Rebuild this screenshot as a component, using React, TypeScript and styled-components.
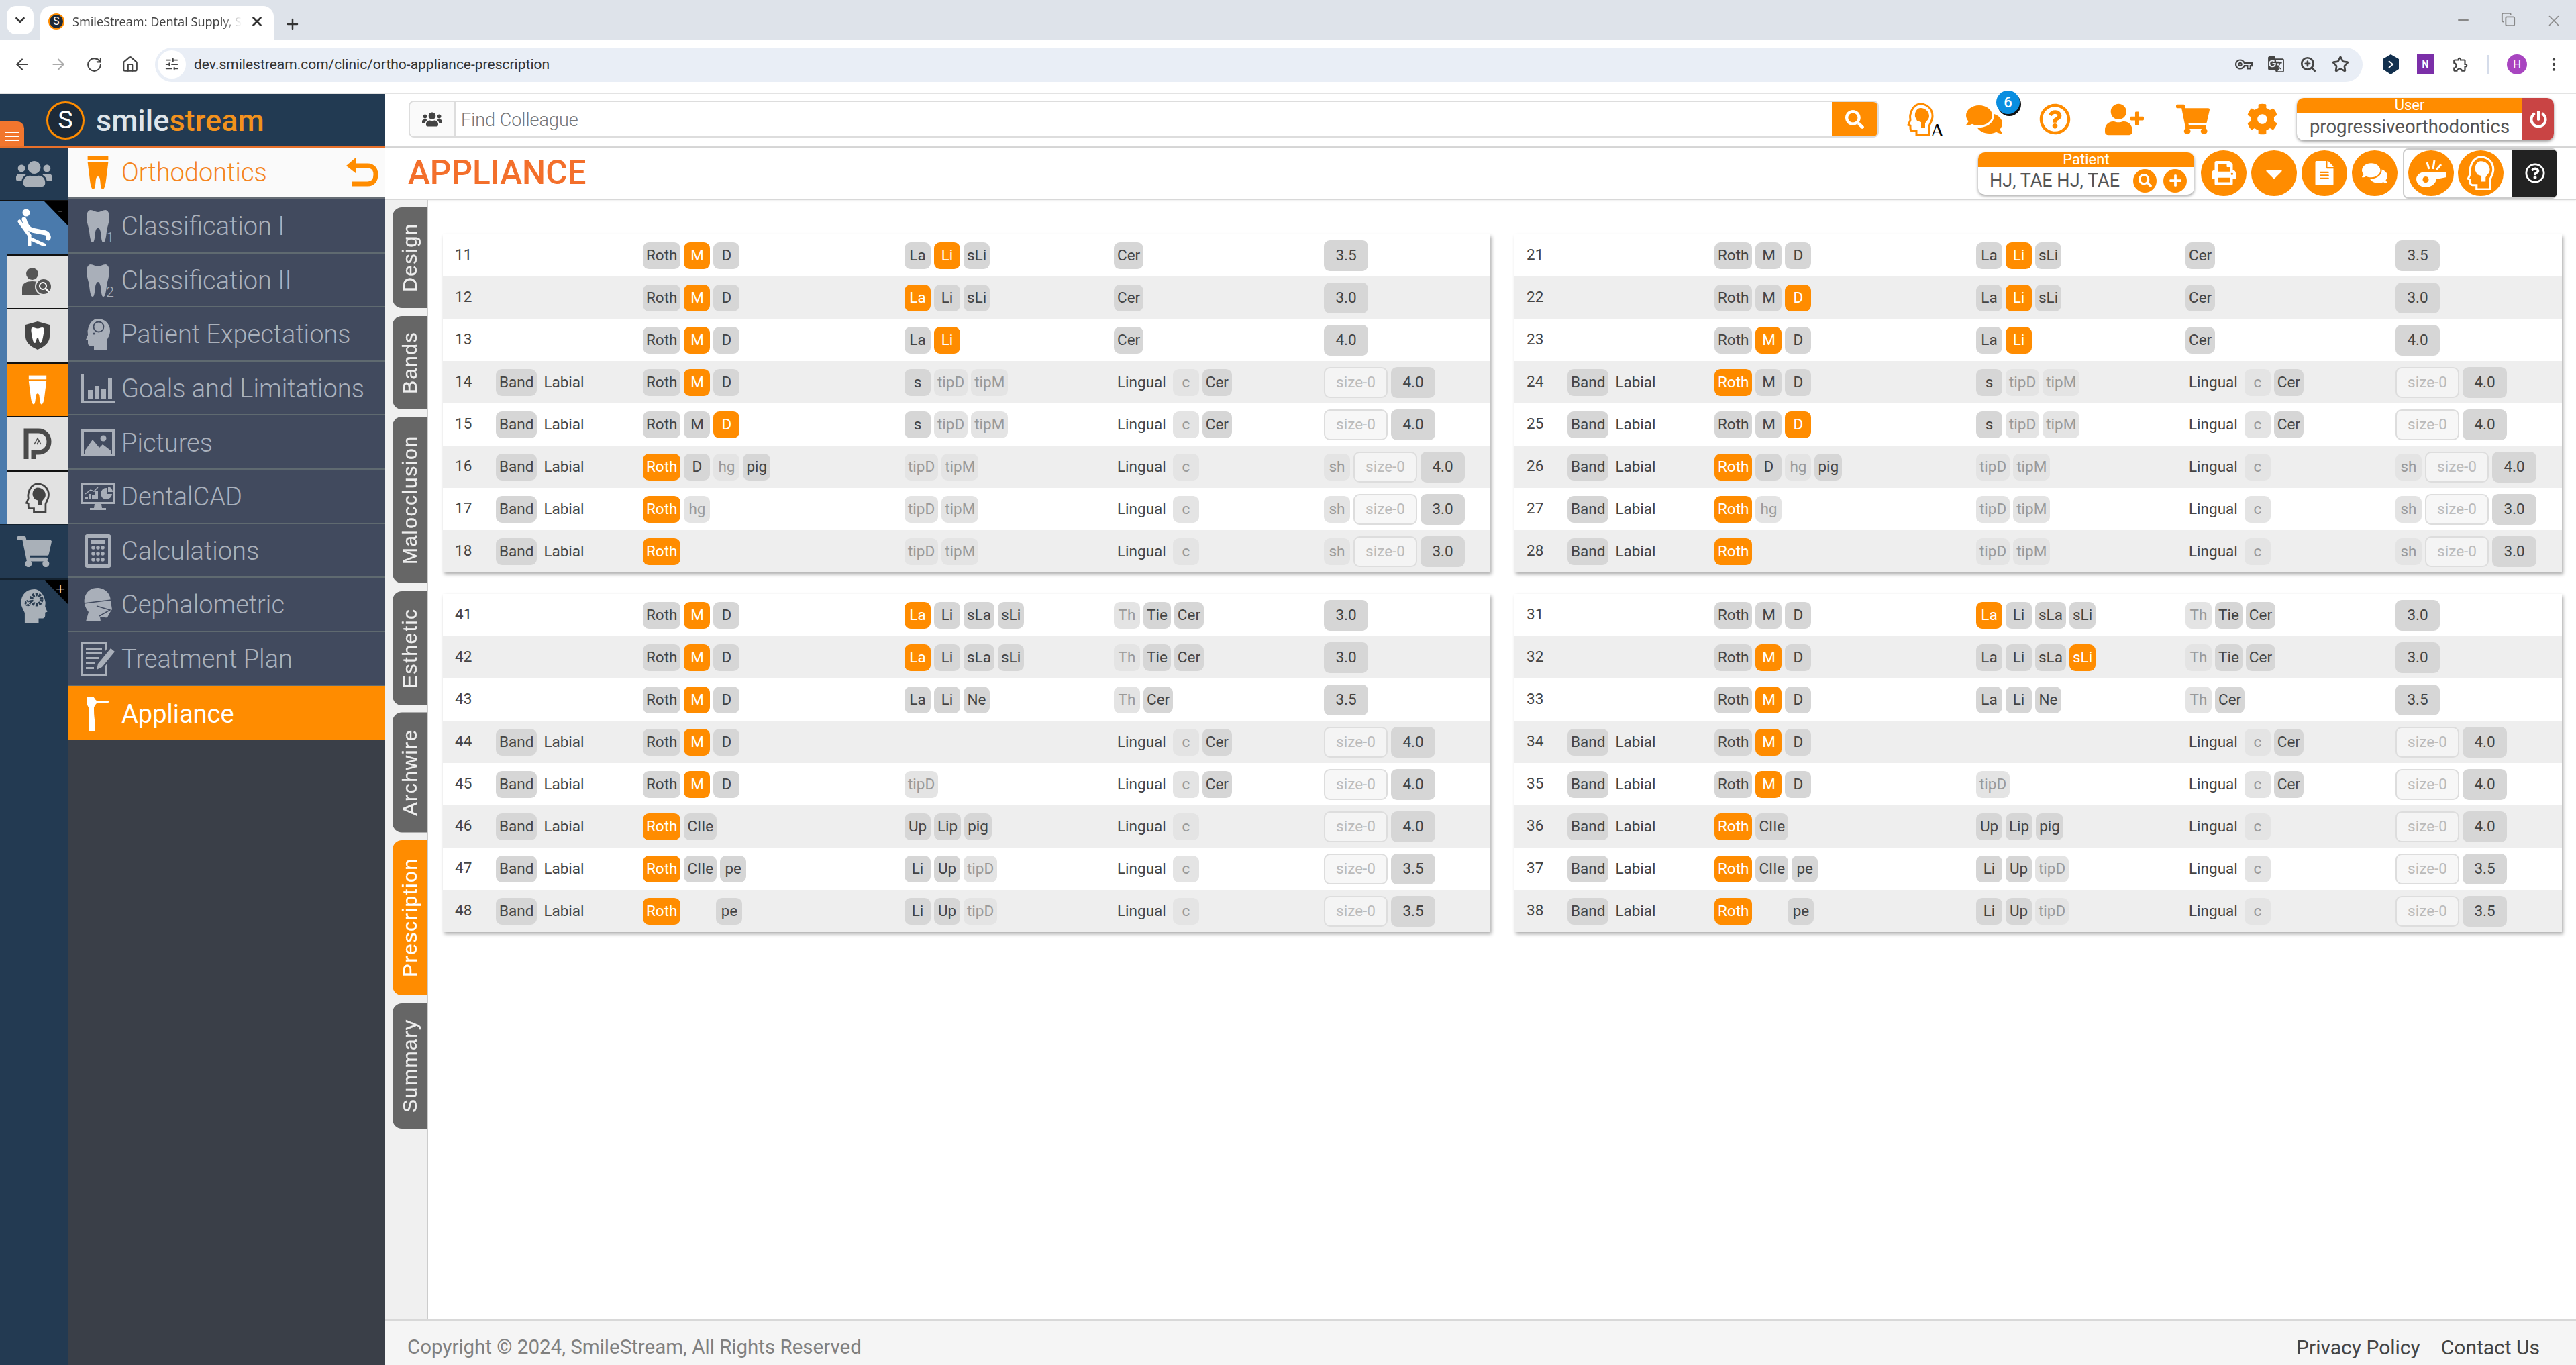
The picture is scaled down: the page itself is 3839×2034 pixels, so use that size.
import React from 'react'
import styled, { createGlobalStyle } from 'styled-components'
import {
  ArrowLeft, ArrowRight, RotateCw, Home, ChevronDown, X, Plus, Minus, Copy,
  ZoomIn, Star, MoreVertical, SlidersHorizontal,
} from 'lucide-react'
import {
  FaUsers, FaSearch, FaRegQuestionCircle, FaUserPlus, FaShoppingCart, FaCog, FaPowerOff,
  FaPrint, FaCaretDown, FaFileAlt, FaComments, FaPlus,
} from 'react-icons/fa'
import { MdGTranslate, MdOutlineVpnKey, MdOutlineExtension } from 'react-icons/md'

const ORANGE = '#ff8c00'

const GlobalStyle = createGlobalStyle`
  html, body { margin: 0; padding: 0; background: #fff; overflow: hidden; }
  * { box-sizing: border-box; }
  body { font-family: Roboto, "Liberation Sans", sans-serif; color: #444; }
`

const Page = styled.div`
  width: 3839px;
  height: 2034px;
  display: flex;
  flex-direction: column;
  overflow: hidden;
`

/* browser chrome */
const TabStrip = styled.div`
  height: 60px;
  background: #dee3ea;
  display: flex;
  align-items: flex-end;
  padding-left: 10px;
  color: #333;
`
const TabList = styled.div`
  width: 40px;
  height: 42px;
  margin-bottom: 9px;
  margin-right: 10px;
  border-radius: 14px;
  background: #fff;
  display: flex;
  align-items: center;
  justify-content: center;
`
const BrowserTab = styled.div`
  width: 348px;
  height: 51px;
  background: #fff;
  border-radius: 16px 16px 0 0;
  display: flex;
  align-items: center;
  padding: 0 14px 6px 12px;
  gap: 12px;
`
const TabTitle = styled.span`
  flex: 1;
  white-space: nowrap;
  overflow: hidden;
  font-family: "Noto Sans", sans-serif;
  font-size: 18px;
  color: #444;
  -webkit-mask-image: linear-gradient(90deg, #000 88%, transparent);
`
const NewTab = styled.div`
  margin: 0 0 12px 16px;
  display: flex;
`
const WindowButtons = styled.div`
  margin: 18px 20px 16px auto;
  display: flex;
  gap: 44px;
  color: #888;
  align-self: flex-start;
`
const Toolbar = styled.div`
  height: 80px;
  background: #fff;
  border-bottom: 2px solid #e3e3e3;
  display: flex;
  align-items: center;
  padding: 0 0 6px 20px;
  color: #444;
`
const NavButtons = styled.div`
  display: flex;
  align-items: center;
  gap: 28px;
  margin-right: 24px;
`
const Omnibox = styled.div`
  width: 3290px;
  height: 51px;
  flex: none;
  border-radius: 26px;
  background: #e9eef6;
  display: flex;
  align-items: center;
  padding: 0 20px 0 4px;
  gap: 12px;
`
const SiteInfo = styled.div`
  width: 42px;
  height: 42px;
  border-radius: 50%;
  background: #fff;
  display: flex;
  align-items: center;
  justify-content: center;
`
const UrlText = styled.span`
  font-size: 21px;
  color: #333;
  flex: 1;
`
const OmniIcons = styled.div`
  display: flex;
  align-items: center;
  gap: 22px;
`
const ExtIcons = styled.div`
  display: flex;
  align-items: center;
  gap: 27px;
  margin-left: 30px;
`
const Avatar = styled.div`
  width: 30px;
  height: 30px;
  border-radius: 50%;
  background: #a845c0;
  color: #fff;
  font-size: 17px;
  display: flex;
  align-items: center;
  justify-content: center;
`
const ExtDivider = styled.div`
  width: 2px;
  height: 28px;
  background: #d5dcea;
`
const OneNote = styled.div`
  width: 25px;
  height: 30px;
  background: #7b2fa8;
  color: #fff;
  font-size: 14px;
  font-weight: 700;
  display: flex;
  align-items: center;
  justify-content: center;
`

/* app frame */
const Body = styled.div`
  flex: 1;
  display: flex;
  min-height: 0;
`
const Sidebar = styled.aside`
  width: 574px;
  flex: none;
  display: flex;
  flex-direction: column;
  position: relative;
`
const LogoBar = styled.div`
  height: 80px;
  flex: none;
  background: #223a52;
  border-bottom: 2px solid #e8702a;
  display: flex;
  align-items: center;
  padding-left: 69px;
  gap: 17px;
`
const LogoMark = styled.div<{ $size: number }>`
  width: ${(p) => p.$size}px;
  height: ${(p) => p.$size}px;
  border-radius: 50%;
  border: ${(p) => Math.max(2, p.$size * 0.06)}px solid ${ORANGE};
  background: #1d2a38;
  color: #fff;
  font-size: ${(p) => p.$size * 0.66}px;
  line-height: 1;
  display: flex;
  align-items: center;
  justify-content: center;
  flex: none;
`
const LogoText = styled.div`
  font-size: 45px;
  font-weight: 500;
  color: #dfe5ea;
  line-height: 1;
  span { color: #f2921d; }
`
const MenuToggle = styled.div`
  position: absolute;
  left: 0;
  top: 41px;
  width: 36px;
  height: 37px;
  background: #f2762e;
  border-radius: 0 10px 0 0;
  display: flex;
  flex-direction: column;
  justify-content: flex-end;
  gap: 4px;
  padding: 0 8px 8px;
  i { display: block; height: 2px; background: #fff; }
`
const SideColumns = styled.div`
  flex: 1;
  display: flex;
  min-height: 0;
`
const Rail = styled.nav`
  width: 101px;
  flex: none;
  background: #233a52;
  display: flex;
  flex-direction: column;
`
const RailGroup = styled.div`
  background: #4a7aac;
  padding-left: 11px;
  display: flex;
  flex-direction: column;
`
const RailItem = styled.div<{ $tone?: 'navy' | 'blue' | 'grey' | 'orange' }>`
  height: 80.5px;
  position: relative;
  display: flex;
  align-items: center;
  justify-content: center;
  border-top: 2px solid ${(p) => (p.$tone === 'navy' ? '#14222f' : '#111')};
  background: ${(p) =>
    p.$tone === 'orange' ? ORANGE : p.$tone === 'blue' ? '#4a7aac' : p.$tone === 'grey' ? '#e2e2e2' : '#233a52'};
`
const RailTop = styled(RailItem)`
  height: 78px;
  border-top: none;
`
const BlueItem = styled(RailItem)`
  margin-left: -11px;
`
const Corner = styled.div`
  position: absolute;
  top: 0;
  right: 0;
  width: 0;
  height: 0;
  border-style: solid;
  border-width: 0 35px 36px 0;
  border-color: transparent #000 transparent transparent;
`
const CornerMark = styled.span`
  position: absolute;
  top: 2px;
  right: 3px;
  width: 16px;
  text-align: center;
  font-size: 24px;
  line-height: 24px;
  font-weight: 300;
  color: #fff;
`
const Menu = styled.div`
  flex: 1;
  background: #3a3f48;
  display: flex;
  flex-direction: column;
`
const MenuHead = styled.div`
  height: 77px;
  flex: none;
  background: #fafafa;
  display: flex;
  align-items: center;
  padding: 0 10px 0 20px;
  border-bottom: 3px solid #666d75;
`
const MenuRow = styled.div<{ $active?: boolean }>`
  height: ${(p) => (p.$active ? 81 : 80.6)}px;
  flex: none;
  background: ${(p) => (p.$active ? ORANGE : '#414a5e')};
  border-bottom: ${(p) => (p.$active ? 'none' : '2px solid #5f6a70')};
  display: flex;
  align-items: center;
  padding: 2px 0 0 20px;
`
const MenuIcon = styled.div`
  width: 60px;
  flex: none;
  padding-right: 10px;
  display: flex;
  justify-content: center;
  align-items: center;
  position: relative;
`
const ToothSub = styled.span`
  position: absolute;
  right: 11px;
  bottom: -4px;
  font-size: 21px;
  line-height: 21px;
  font-weight: 300;
  color: #a9afb9;
`
const MenuLabel = styled.span<{ $active?: boolean; $head?: boolean }>`
  font-size: 38px;
  font-weight: ${(p) => (p.$active ? 400 : 300)};
  color: ${(p) => (p.$head ? '#f5851f' : p.$active ? '#fff' : '#aab1bc')};
  flex: 1;
`

const Main = styled.main`
  flex: 1;
  min-width: 0;
  display: flex;
  flex-direction: column;
`
const TopBar = styled.div`
  height: 80px;
  flex: none;
  border-bottom: 2px solid #d8d8d8;
  display: flex;
  align-items: center;
  padding: 0 0 3px 35px;
`
const Search = styled.div`
  width: 2191px;
  height: 55px;
  margin-right: 11px;
  display: flex;
  border: 2px solid #ddd;
  border-radius: 8px;
  overflow: hidden;
  flex: none;
`
const SearchAddon = styled.div`
  width: 68px;
  border-right: 2px solid #ddd;
  display: flex;
  align-items: center;
  justify-content: center;
  color: #444;
  background: #fafafa;
`
const SearchInput = styled.div`
  flex: 1;
  padding: 2px 0 0 8px;
  font-size: 27px;
  font-weight: 300;
  color: #777;
  display: flex;
  align-items: center;
`
const SearchButton = styled.div`
  width: 68px;
  background: ${ORANGE};
  display: flex;
  align-items: center;
  justify-content: center;
  color: #fff;
`
const TopIcon = styled.div<{ $nudge?: number }>`
  width: 102px;
  flex: none;
  padding-right: ${(p) => p.$nudge ?? 0}px;
  display: flex;
  align-items: center;
  justify-content: center;
  position: relative;
  color: ${ORANGE};
`
const SerifA = styled.span`
  position: absolute;
  left: 66px;
  bottom: -6px;
  font-family: "Liberation Serif", serif;
  font-size: 28px;
  line-height: 28px;
  color: #000;
`
const Badge = styled.span`
  position: absolute;
  left: 62px;
  top: -16px;
  width: 35px;
  height: 35px;
  border-radius: 50%;
  background: #0a8ee0;
  box-shadow: 2px 3px 0 #111;
  color: #fff;
  font-size: 22px;
  font-weight: 500;
  display: flex;
  align-items: center;
  justify-content: center;
`
const IdBox = styled.div`
  width: 322px;
  border-radius: 10px;
  box-shadow: 0 2px 4px rgba(0, 0, 0, 0.4);
  background: #fff;
  flex: none;
`
const IdHead = styled.div<{ $square?: boolean }>`
  height: 22px;
  background: ${ORANGE};
  border-radius: ${(p) => (p.$square ? '10px 0 0 0' : '10px 10px 0 0')};
  color: #fff;
  font-size: 22px;
  line-height: 22px;
  text-align: center;
`
const UserBox = styled.div`
  display: flex;
  height: 63px;
  width: 383px;
  flex: none;
  border-radius: 10px;
  background: #fff;
  box-shadow: 0 2px 4px rgba(0, 0, 0, 0.4);
`
const UserMain = styled.div`
  flex: 1;
  display: flex;
  flex-direction: column;
`
const UserName = styled.div`
  flex: 1;
  font-size: 27.5px;
  color: #555;
  display: flex;
  align-items: center;
  justify-content: center;
`
const PowerBlock = styled.div`
  width: 47px;
  background: #c94444;
  border-radius: 0 10px 10px 0;
  color: #fff;
  display: flex;
  align-items: center;
  justify-content: center;
`
const SubBar = styled.div`
  height: 78px;
  flex: none;
  border-bottom: 2px solid #d8d8d8;
  box-shadow: 0 1px 3px rgba(0, 0, 0, 0.08);
  display: flex;
  align-items: center;
  padding: 0 28px 0 34px;
`
const Title = styled.h1`
  flex: 1;
  margin: 0;
  font-size: 49.5px;
  font-weight: 500;
  color: #f36f2b;
  line-height: 1;
`
const PatientBody = styled.div`
  height: 41px;
  display: flex;
  align-items: center;
  padding: 0 11px 0 17px;
`
const PatientName = styled.span`
  flex: 1;
  font-size: 27px;
  color: #555;
`
const SmallRound = styled.div`
  width: 35px;
  height: 35px;
  margin-left: 10px;
  border-radius: 50%;
  background: ${ORANGE};
  color: #fff;
  display: flex;
  align-items: center;
  justify-content: center;
`
const RoundButton = styled.div`
  width: 68px;
  height: 68px;
  border-radius: 50%;
  background: ${ORANGE};
  color: #fff;
  display: flex;
  align-items: center;
  justify-content: center;
  flex: none;
`
const RoundRow = styled.div`
  display: flex;
  gap: 7px;
  margin: 0 8px 0 10px;
`
const ToolGroup = styled.div`
  width: 230px;
  height: 75px;
  border: 2px solid #ccc;
  border-right: none;
  border-radius: 8px;
  display: flex;
  align-items: center;
  gap: 6px;
  padding-left: 6px;
  overflow: hidden;
  flex: none;
`
const HelpBlock = styled.div`
  margin-left: auto;
  width: 67px;
  height: 100%;
  background: #222;
  color: #fff;
  display: flex;
  align-items: center;
  justify-content: center;
`

const ContentRow = styled.div`
  flex: 1;
  display: flex;
  min-height: 0;
`
const TabGutter = styled.div`
  width: 64px;
  flex: none;
  background: #f0f0f0;
  border-right: 2px solid #ccc;
  padding: 11px 0 0 11px;
  display: flex;
  flex-direction: column;
  gap: 11.5px;
`
const SideTab = styled.div<{ $active?: boolean; $length: number }>`
  width: 51px;
  height: ${(p) => p.$length}px;
  flex: none;
  border-radius: 0 14px 14px 0;
  background: ${(p) => (p.$active ? ORANGE : '#666')};
  color: ${(p) => (p.$active ? '#fff' : '#eee')};
  writing-mode: vertical-rl;
  transform: rotate(180deg);
  font-family: "Liberation Sans", sans-serif;
  font-size: 30px;
  letter-spacing: 1.6px;
  -webkit-text-stroke: 0.3px currentColor;
  line-height: 51px;
  text-align: center;
`
const PanelGrid = styled.div`
  flex: 1;
  padding: 51px 21px 0 22px;
  display: grid;
  grid-template-columns: 1fr 1fr;
  grid-auto-rows: min-content;
  column-gap: 36px;
  row-gap: 32px;
`
const Panel = styled.section`
  box-shadow: 2px 3px 5px rgba(0, 0, 0, 0.32);
  background: #fff;
`
const Row = styled.div`
  height: 63px;
  display: grid;
  grid-template-columns: 79px 219px 390px 312px 313px 1fr;
  align-items: center;
  &:nth-child(even) { background: #eee; }
`
const Num = styled.div`
  padding: 0 0 3px 18px;
  font-size: 22.5px;
  color: #444;
`
const Cell = styled.div`
  display: flex;
  align-items: center;
  gap: 5px;
  font-size: 22.5px;
`
const Pill = styled.span<{ $state?: Tone }>`
  min-width: 39px;
  height: 40px;
  padding: 0 5px 2px;
  border-radius: 9px;
  display: inline-flex;
  align-items: center;
  justify-content: center;
  background: ${(p) => (p.$state === 'on' ? ORANGE : p.$state === 'dim' ? '#e4e4e4' : '#d6d6d6')};
  color: ${(p) => (p.$state === 'on' ? '#fff' : p.$state === 'dim' ? '#999' : '#444')};
`
const Spacer = styled.span`
  width: 43px;
`
const PlainText = styled.span`
  padding: 0 5px 2px;
  color: #444;
`
const SizeValue = styled(Pill)`
  height: 46px;
  width: 66px;
`
const SizeInput = styled.span`
  width: 95px;
  height: 46px;
  padding-bottom: 2px;
  border: 2px solid #ddd;
  border-radius: 9px;
  background: rgba(245, 245, 245, 0.8);
  color: #bbb;
  display: inline-flex;
  align-items: center;
  justify-content: center;
`

const Footer = styled.footer`
  height: 68px;
  flex: none;
  background: #f5f5f5;
  border-top: 2px solid #d8d8d8;
  display: flex;
  align-items: center;
  padding: 12px 54px 0 33px;
  font-size: 30px;
`
const Copyright = styled.span`
  flex: 1;
  color: #808080;
  font-size: 29.5px;
`
const FootLink = styled.a`
  color: #444;
  margin-left: 31px;
`

/* drawings */
const tooth = 'M6 0C10 0 13 3 17 3C21 3 24 0 28 0C32 0 34 5 34 11C34 18 31 24 30 32C29 40 28 48 25 48C22 48 22 40 21 33C20 28 18 26 17 26C16 26 14 28 13 33C12 40 12 48 9 48C6 48 5 40 4 32C3 24 0 18 0 11C0 5 2 0 6 0Z'
const head = 'M20 1C31 1 38 9 38 19C38 26 34 30 33 34L33 47L14 47L14 41L8 41C6 41 5 39 5 37L5 33L2 32L5 25C5 22 4 20 5 17C7 7 13 1 20 1Z'
const brain = 'M20 7C28 7 33 13 33 19C33 24 29 26 27 30L27 36L21 36L21 28L15 26L12 20C11 13 15 7 20 7Z'

const Tooth = ({ color = '#a9afb9', w = 34, h = 48 }: { color?: string; w?: number; h?: number }) => (
  <svg width={w} height={h} viewBox="0 0 34 48"><path d={tooth} fill={color} /></svg>
)
const CrownTooth = ({ color, w, h }: { color: string; w: number; h: number }) => (
  <svg width={w} height={h} viewBox="0 0 34 52" fill={color}>
    <path d="M1 0H33V7H1Z" />
    <path d="M1 10H33L30 34C29 42 28 52 24 52C21 52 21 42 20 36C19 31 15 31 14 36C13 42 13 52 10 52C6 52 5 42 4 34Z" />
  </svg>
)
const ChairIcon = () => (
  <svg width="54" height="56" viewBox="0 0 54 56" fill="none" stroke="#fff" strokeLinecap="round">
    <circle cx="15" cy="6" r="5.500" fill="#fff" stroke="none" />
    <path d="M5 19L20 40" strokeWidth="5" />
    <path d="M12 16C14 24 18 30 24 32L44 36C47 37 49 41 48 44" strokeWidth="7" />
    <path d="M20 40L20 54M20 44L42 54" strokeWidth="5" />
  </svg>
)
const UserSearchIcon = () => (
  <svg width="46" height="42" viewBox="0 0 46 42">
    <circle cx="15" cy="9" r="9" fill="#555" />
    <path d="M0 40V30C0 23 7 20 15 20C23 20 30 23 30 30V40Z" fill="#555" />
    <circle cx="32" cy="28" r="12" fill="#555" stroke="#e2e2e2" strokeWidth="2" />
    <circle cx="31" cy="27" r="5" fill="none" stroke="#fff" strokeWidth="2" />
    <path d="M35 31L40 36" stroke="#fff" strokeWidth="2.500" />
  </svg>
)
const ShieldIcon = () => (
  <svg width="36" height="42" viewBox="0 0 36 42">
    <path d="M18 0L36 5V22C36 32 27 38 18 42C9 38 0 32 0 22V5Z" fill="#444" />
    <path d="M11 9C14 9 15 10.500 18 10.500C21 10.500 22 9 25 9C28 9 28 13 27 18C26 23 25 32 22 32C20 32 20 24 18 24C16 24 16 32 14 32C11 32 10 23 9 18C8 13 8 9 11 9Z" fill="#fff" />
  </svg>
)
const PLogoIcon = () => (
  <svg width="42" height="46" viewBox="0 0 42 46" fill="none" stroke="#4a4a4a">
    <path d="M4 46V4H22C32 4 38 11 38 20C38 30 31 36 22 36H15V46" strokeWidth="7" />
    <path d="M16 24L21 15L26 24M20 24L23 19" strokeWidth="1.500" />
  </svg>
)
const BrainHeadIcon = ({ line, fill, w, h }: { line: string; fill: string; w: number; h: number }) => (
  <svg width={w} height={h} viewBox="0 0 40 48">
    <path d={head} fill="none" stroke={line} strokeWidth="3" />
    <path d={brain} fill={fill} />
  </svg>
)
const ThoughtHeadIcon = () => (
  <svg width="40" height="50" viewBox="0 0 40 48" fill="#a9afb9">
    <path d={head} />
    <circle cx="21" cy="13" r="7.500" fill="none" stroke="#414a5e" strokeWidth="1.800" />
    <circle cx="14" cy="23" r="1.600" fill="#414a5e" />
  </svg>
)
const GearHeadIcon = () => (
  <svg width="46" height="52" viewBox="0 0 40 48">
    <path d={head} transform="translate(40 0) scale(-1 1)" fill="#a9b0b8" />
    <circle cx="23" cy="15" r="7" fill="none" stroke="#2a3c50" strokeWidth="5" strokeDasharray="3 1.500" />
    <circle cx="11" cy="20" r="3" fill="none" stroke="#2a3c50" strokeWidth="2.500" strokeDasharray="1.500 1" />
  </svg>
)
const ChartIcon = () => (
  <svg width="50" height="44" viewBox="0 0 50 44" fill="#a9afb9">
    <path d="M0 0H4V40H50V44H0Z" />
    <path d="M10 24H17V37H10ZM20 18H27V37H20ZM30 22H37V37H30ZM40 6H46V37H40Z" />
  </svg>
)
const PictureIcon = () => (
  <svg width="50" height="40" viewBox="0 0 50 40" fill="#a9afb9">
    <path fillRule="evenodd" d="M0 0H50V40H0ZM4 4V36H46V4Z" />
    <circle cx="33" cy="13" r="4.500" />
    <path d="M5 32L17 15L27 27L32 22L45 32V36H5Z" />
  </svg>
)
const MonitorIcon = () => (
  <svg width="50" height="42" viewBox="0 0 50 42" fill="#a9afb9">
    <path fillRule="evenodd" d="M0 0H50V32H30L31 38H37V41H13V38H19L20 32H0ZM3 3V29H47V3Z" />
    <path d="M6 25H10V21H6ZM11 25H15V17H11ZM16 25H20V19H16ZM21 25H25V13H21Z" />
    <path d="M6 17L14 11L19 13L25 7" fill="none" stroke="#a9afb9" strokeWidth="1.500" />
    <path d="M38 8A8.500 8.500 0 1 0 46 17H38Z" />
    <path d="M40 6A8 8 0 0 1 47 14H40Z" />
  </svg>
)
const CalcIcon = () => (
  <svg width="40" height="50" viewBox="0 0 40 50" fill="#a9afb9">
    <path fillRule="evenodd" d="M4 0H36C38 0 40 2 40 4V46C40 48 38 50 36 50H4C2 50 0 48 0 46V4C0 2 2 0 4 0ZM5 5V45H35V5Z" />
    <path d="M10 9H30V14H10Z" />
    {[20, 29, 38].map((y) => [13, 20, 27].map((x) => <circle key={`${x}-${y}`} cx={x} cy={y} r="2.800" />))}
  </svg>
)
const CephIcon = () => (
  <svg width="44" height="50" viewBox="0 0 44 50" fill="#a9afb9">
    <path d="M21 0C33 0 41 9 41 20L43 32C40 36 38 40 36 44C32 45 28 43 25 43L26 50H4L8 36C2 28 0 20 3 12C6 4 13 0 21 0Z" />
    <path d="M1 23L42 18M20 27L40 33L24 42" fill="none" stroke="#414a5e" strokeWidth="1.500" />
  </svg>
)
const PlanIcon = () => (
  <svg width="50" height="52" viewBox="0 0 50 52" fill="#a9afb9">
    <path fillRule="evenodd" d="M0 0H39V10L36 14V3H3V49H36V36L39 32V52H0Z" />
    <path d="M7 9H31V12H7ZM7 16H31V19H7ZM7 23H27V26H7ZM7 30H20V33H7ZM7 38H19V41H7Z" />
    <path d="M44 10L50 15L31 38L23 42L25 33Z" />
  </svg>
)
const HandpieceIcon = () => (
  <svg width="34" height="52" viewBox="0 0 34 52" fill="#fff">
    <path d="M1 0H10C12 2 13 5 15 6H32C34 6 34 9 32 9L15 10C13 12 12 14 11 16V20H3V16C0 12 0 5 1 0Z" />
    <path d="M4 20H11C11 28 12 34 12.500 38L12 52H3.500L3 38C3.500 34 4 28 4 20Z" />
  </svg>
)
const UndoIcon = () => (
  <svg width="50" height="44" viewBox="0 0 50 44" fill="none" stroke={ORANGE} strokeWidth="7">
    <path d="M9 12H34C42 12 46 18 46 25C46 33 42 39 34 39H11" />
    <path d="M16 0L2 12L16 23" strokeWidth="0" fill={ORANGE} />
  </svg>
)
const WhistleIcon = () => (
  <svg width="46" height="44" viewBox="0 0 46 44" fill="#fff">
    <path fillRule="evenodd" d="M14 20H46V28L31 31C30 38 23 43 15 43C7 43 1 37 1 31C1 25 7 20 14 20ZM15 27A4.500 4.500 0 1 0 15.010 27Z" />
    <path d="M20 16L17 6M26 16L28 3M31 17L38 9" stroke="#fff" strokeWidth="3" fill="none" />
  </svg>
)
const ExtHex = () => (
  <svg width="24" height="30" viewBox="0 0 24 30">
    <path d="M12 0L24 7V22L12 30L0 22V7Z" fill="#12304e" />
    <path d="M9 10L15 15L9 20" fill="none" stroke="#fff" strokeWidth="1.800" />
  </svg>
)

type Tone = 'on' | 'off' | 'dim'

/* tokens: "*x" is selected, "~x" is greyed out, "_" keeps a slot empty */
const Tokens = ({ text }: { text: string }) => (
  <>
    {text.split(' ').filter(Boolean).map((t, i) => {
      if (t === '_') return <Spacer key={i} />
      if (t === 'Lingual' || t === 'Labial') return <PlainText key={i}>{t}</PlainText>
      if (t === 'size-0') return <SizeInput key={i}>{t}</SizeInput>
      if (/^\d\.\d$/.test(t)) return <SizeValue key={i}>{t}</SizeValue>
      const state: Tone = t[0] === '*' ? 'on' : t[0] === '~' ? 'dim' : 'off'
      return <Pill key={i} $state={state}>{state === 'off' ? t : t.slice(1)}</Pill>
    })}
  </>
)

type RowData = [string, string, string, string, string, string]

const B = 'Band Labial'
const upperRight: RowData[] = [
  ['11', '', 'Roth *M D', 'La *Li sLi', 'Cer', '3.5'],
  ['12', '', 'Roth *M D', '*La Li sLi', 'Cer', '3.0'],
  ['13', '', 'Roth *M D', 'La *Li', 'Cer', '4.0'],
  ['14', B, 'Roth *M D', 's ~tipD ~tipM', 'Lingual ~c Cer', 'size-0 4.0'],
  ['15', B, 'Roth M *D', 's ~tipD ~tipM', 'Lingual ~c Cer', 'size-0 4.0'],
  ['16', B, '*Roth D ~hg pig', '~tipD ~tipM', 'Lingual ~c', '~sh size-0 4.0'],
  ['17', B, '*Roth ~hg', '~tipD ~tipM', 'Lingual ~c', '~sh size-0 3.0'],
  ['18', B, '*Roth', '~tipD ~tipM', 'Lingual ~c', '~sh size-0 3.0'],
]
const upperLeft: RowData[] = [
  ['21', '', 'Roth M D', 'La *Li sLi', 'Cer', '3.5'],
  ['22', '', 'Roth M *D', 'La *Li sLi', 'Cer', '3.0'],
  ['23', '', 'Roth *M D', 'La *Li', 'Cer', '4.0'],
  ['24', B, '*Roth M D', 's ~tipD ~tipM', 'Lingual ~c Cer', 'size-0 4.0'],
  ['25', B, 'Roth M *D', 's ~tipD ~tipM', 'Lingual ~c Cer', 'size-0 4.0'],
  ['26', B, '*Roth D ~hg pig', '~tipD ~tipM', 'Lingual ~c', '~sh size-0 4.0'],
  ['27', B, '*Roth ~hg', '~tipD ~tipM', 'Lingual ~c', '~sh size-0 3.0'],
  ['28', B, '*Roth', '~tipD ~tipM', 'Lingual ~c', '~sh size-0 3.0'],
]
const lowerTail = (n: number): RowData[] => [
  [`${n}4`, B, 'Roth *M D', '', 'Lingual ~c Cer', 'size-0 4.0'],
  [`${n}5`, B, 'Roth *M D', '~tipD', 'Lingual ~c Cer', 'size-0 4.0'],
  [`${n}6`, B, '*Roth CIIe', 'Up Lip pig', 'Lingual ~c', 'size-0 4.0'],
  [`${n}7`, B, '*Roth CIIe pe', 'Li Up ~tipD', 'Lingual ~c', 'size-0 3.5'],
  [`${n}8`, B, '*Roth _ pe', 'Li Up ~tipD', 'Lingual ~c', 'size-0 3.5'],
]
const lowerRight: RowData[] = [
  ['41', '', 'Roth *M D', '*La Li sLa sLi', '~Th Tie Cer', '3.0'],
  ['42', '', 'Roth *M D', '*La Li sLa sLi', '~Th Tie Cer', '3.0'],
  ['43', '', 'Roth *M D', 'La Li Ne', '~Th Cer', '3.5'],
  ...lowerTail(4),
]
const lowerLeft: RowData[] = [
  ['31', '', 'Roth M D', '*La Li sLa sLi', '~Th Tie Cer', '3.0'],
  ['32', '', 'Roth *M D', 'La Li sLa *sLi', '~Th Tie Cer', '3.0'],
  ['33', '', 'Roth *M D', 'La Li Ne', '~Th Cer', '3.5'],
  ...lowerTail(3),
]

const ToothPanel = ({ rows }: { rows: RowData[] }) => (
  <Panel>
    {rows.map(([num, ...cells]) => (
      <Row key={num}>
        <Num>{num}</Num>
        {cells.map((c, i) => (
          <Cell key={i}><Tokens text={c} /></Cell>
        ))}
      </Row>
    ))}
  </Panel>
)

const menu: { label: string; icon: React.ReactNode; sub?: string }[] = [
  { label: 'Classification I', icon: <Tooth />, sub: '1' },
  { label: 'Classification II', icon: <Tooth />, sub: '2' },
  { label: 'Patient Expectations', icon: <ThoughtHeadIcon /> },
  { label: 'Goals and Limitations', icon: <ChartIcon /> },
  { label: 'Pictures', icon: <PictureIcon /> },
  { label: 'DentalCAD', icon: <MonitorIcon /> },
  { label: 'Calculations', icon: <CalcIcon /> },
  { label: 'Cephalometric', icon: <CephIcon /> },
  { label: 'Treatment Plan', icon: <PlanIcon /> },
]

const tabs: [string, number][] = [
  ['Design', 150],
  ['Bands', 139],
  ['Malocclusion', 248],
  ['Esthetic', 170],
  ['Archwire', 178.5],
  ['Prescription', 231],
  ['Summary', 187],
]

const App = () => (
  <Page>
    <GlobalStyle />
    <TabStrip>
      <TabList><ChevronDown size={22} strokeWidth={3} /></TabList>
      <BrowserTab>
        <LogoMark $size={24}>S</LogoMark>
        <TabTitle>SmileStream: Dental Supply, Sc</TabTitle>
        <X size={22} strokeWidth={3} />
      </BrowserTab>
      <NewTab><Plus size={24} strokeWidth={2.5} /></NewTab>
      <WindowButtons>
        <Minus size={24} />
        <Copy size={22} />
        <X size={26} strokeWidth={1.5} />
      </WindowButtons>
    </TabStrip>
    <Toolbar>
      <NavButtons>
        <ArrowLeft size={26} />
        <ArrowRight size={26} color="#aaa" />
        <RotateCw size={25} />
        <Home size={26} />
      </NavButtons>
      <Omnibox>
        <SiteInfo><SlidersHorizontal size={22} /></SiteInfo>
        <UrlText>dev.smilestream.com/clinic/ortho-appliance-prescription</UrlText>
        <OmniIcons>
          <MdOutlineVpnKey size={26} />
          <MdGTranslate size={26} />
          <ZoomIn size={26} strokeWidth={2.5} />
          <Star size={26} strokeWidth={2.5} />
        </OmniIcons>
      </Omnibox>
      <ExtIcons>
        <ExtHex />
        <OneNote>N</OneNote>
        <MdOutlineExtension size={26} />
        <ExtDivider />
        <Avatar>H</Avatar>
        <MoreVertical size={26} />
      </ExtIcons>
    </Toolbar>
    <Body>
      <Sidebar>
        <LogoBar>
          <LogoMark $size={57}>S</LogoMark>
          <LogoText>smile<span>stream</span></LogoText>
        </LogoBar>
        <MenuToggle><i /><i /><i /></MenuToggle>
        <SideColumns>
          <Rail>
            <RailTop $tone="navy"><FaUsers size={54} color="#a9b0b8" /></RailTop>
            <RailGroup>
              <BlueItem $tone="blue">
                <ChairIcon />
                <Corner />
                <CornerMark>-</CornerMark>
              </BlueItem>
              <RailItem $tone="grey"><UserSearchIcon /></RailItem>
              <RailItem $tone="grey"><ShieldIcon /></RailItem>
              <RailItem $tone="orange"><CrownTooth color="#fff" w={28} h={44} /></RailItem>
              <RailItem $tone="grey"><PLogoIcon /></RailItem>
              <RailItem $tone="grey"><BrainHeadIcon line="#444" fill="#444" w={38} h={44} /></RailItem>
            </RailGroup>
            <RailItem $tone="navy"><FaShoppingCart size={52} color="#a9b0b8" /></RailItem>
            <RailItem $tone="navy">
              <GearHeadIcon />
              <Corner />
              <CornerMark>+</CornerMark>
            </RailItem>
          </Rail>
          <Menu>
            <MenuHead>
              <MenuIcon><CrownTooth color={ORANGE} w={34} h={50} /></MenuIcon>
              <MenuLabel $head>Orthodontics</MenuLabel>
              <UndoIcon />
            </MenuHead>
            {menu.map((m) => (
              <MenuRow key={m.label}>
                <MenuIcon>
                  {m.icon}
                  {m.sub && <ToothSub>{m.sub}</ToothSub>}
                </MenuIcon>
                <MenuLabel>{m.label}</MenuLabel>
              </MenuRow>
            ))}
            <MenuRow $active>
              <MenuIcon><HandpieceIcon /></MenuIcon>
              <MenuLabel $active>Appliance</MenuLabel>
            </MenuRow>
          </Menu>
        </SideColumns>
      </Sidebar>
      <Main>
        <TopBar>
          <Search>
            <SearchAddon><FaUsers size={30} /></SearchAddon>
            <SearchInput>Find Colleague</SearchInput>
            <SearchButton><FaSearch size={28} /></SearchButton>
          </Search>
          <TopIcon>
            <BrainHeadIcon line={ORANGE} fill={ORANGE} w={42} h={48} />
            <SerifA>A</SerifA>
          </TopIcon>
          <TopIcon $nudge={14}>
            <FaComments size={54} />
            <Badge>6</Badge>
          </TopIcon>
          <TopIcon $nudge={8}><FaRegQuestionCircle size={47} /></TopIcon>
          <TopIcon $nudge={4}><FaUserPlus size={58} /></TopIcon>
          <TopIcon $nudge={4}><FaShoppingCart size={50} /></TopIcon>
          <TopIcon $nudge={2}><FaCog size={47} /></TopIcon>
          <UserBox>
            <UserMain>
              <IdHead $square>User</IdHead>
              <UserName>progressiveorthodontics</UserName>
            </UserMain>
            <PowerBlock><FaPowerOff size={26} /></PowerBlock>
          </UserBox>
        </TopBar>
        <SubBar>
          <Title>APPLIANCE</Title>
          <IdBox>
            <IdHead>Patient</IdHead>
            <PatientBody>
              <PatientName>HJ, TAE HJ, TAE</PatientName>
              <SmallRound><FaSearch size={20} /></SmallRound>
              <SmallRound><FaPlus size={20} /></SmallRound>
            </PatientBody>
          </IdBox>
          <RoundRow>
            <RoundButton><FaPrint size={36} /></RoundButton>
            <RoundButton><FaCaretDown size={40} /></RoundButton>
            <RoundButton><FaFileAlt size={36} /></RoundButton>
            <RoundButton><FaComments size={38} /></RoundButton>
          </RoundRow>
          <ToolGroup>
            <RoundButton><WhistleIcon /></RoundButton>
            <RoundButton><BrainHeadIcon line="#fff" fill="#fff" w={44} h={50} /></RoundButton>
            <HelpBlock><FaRegQuestionCircle size={30} /></HelpBlock>
          </ToolGroup>
        </SubBar>
        <ContentRow>
          <TabGutter>
            {tabs.map(([t, len]) => (
              <SideTab key={t} $length={len} $active={t === 'Prescription'}>{t}</SideTab>
            ))}
          </TabGutter>
          <PanelGrid>
            <ToothPanel rows={upperRight} />
            <ToothPanel rows={upperLeft} />
            <ToothPanel rows={lowerRight} />
            <ToothPanel rows={lowerLeft} />
          </PanelGrid>
        </ContentRow>
        <Footer>
          <Copyright>Copyright © 2024, SmileStream, All Rights Reserved</Copyright>
          <FootLink>Privacy Policy</FootLink>
          <FootLink>Contact Us</FootLink>
        </Footer>
      </Main>
    </Body>
  </Page>
)

export default App
